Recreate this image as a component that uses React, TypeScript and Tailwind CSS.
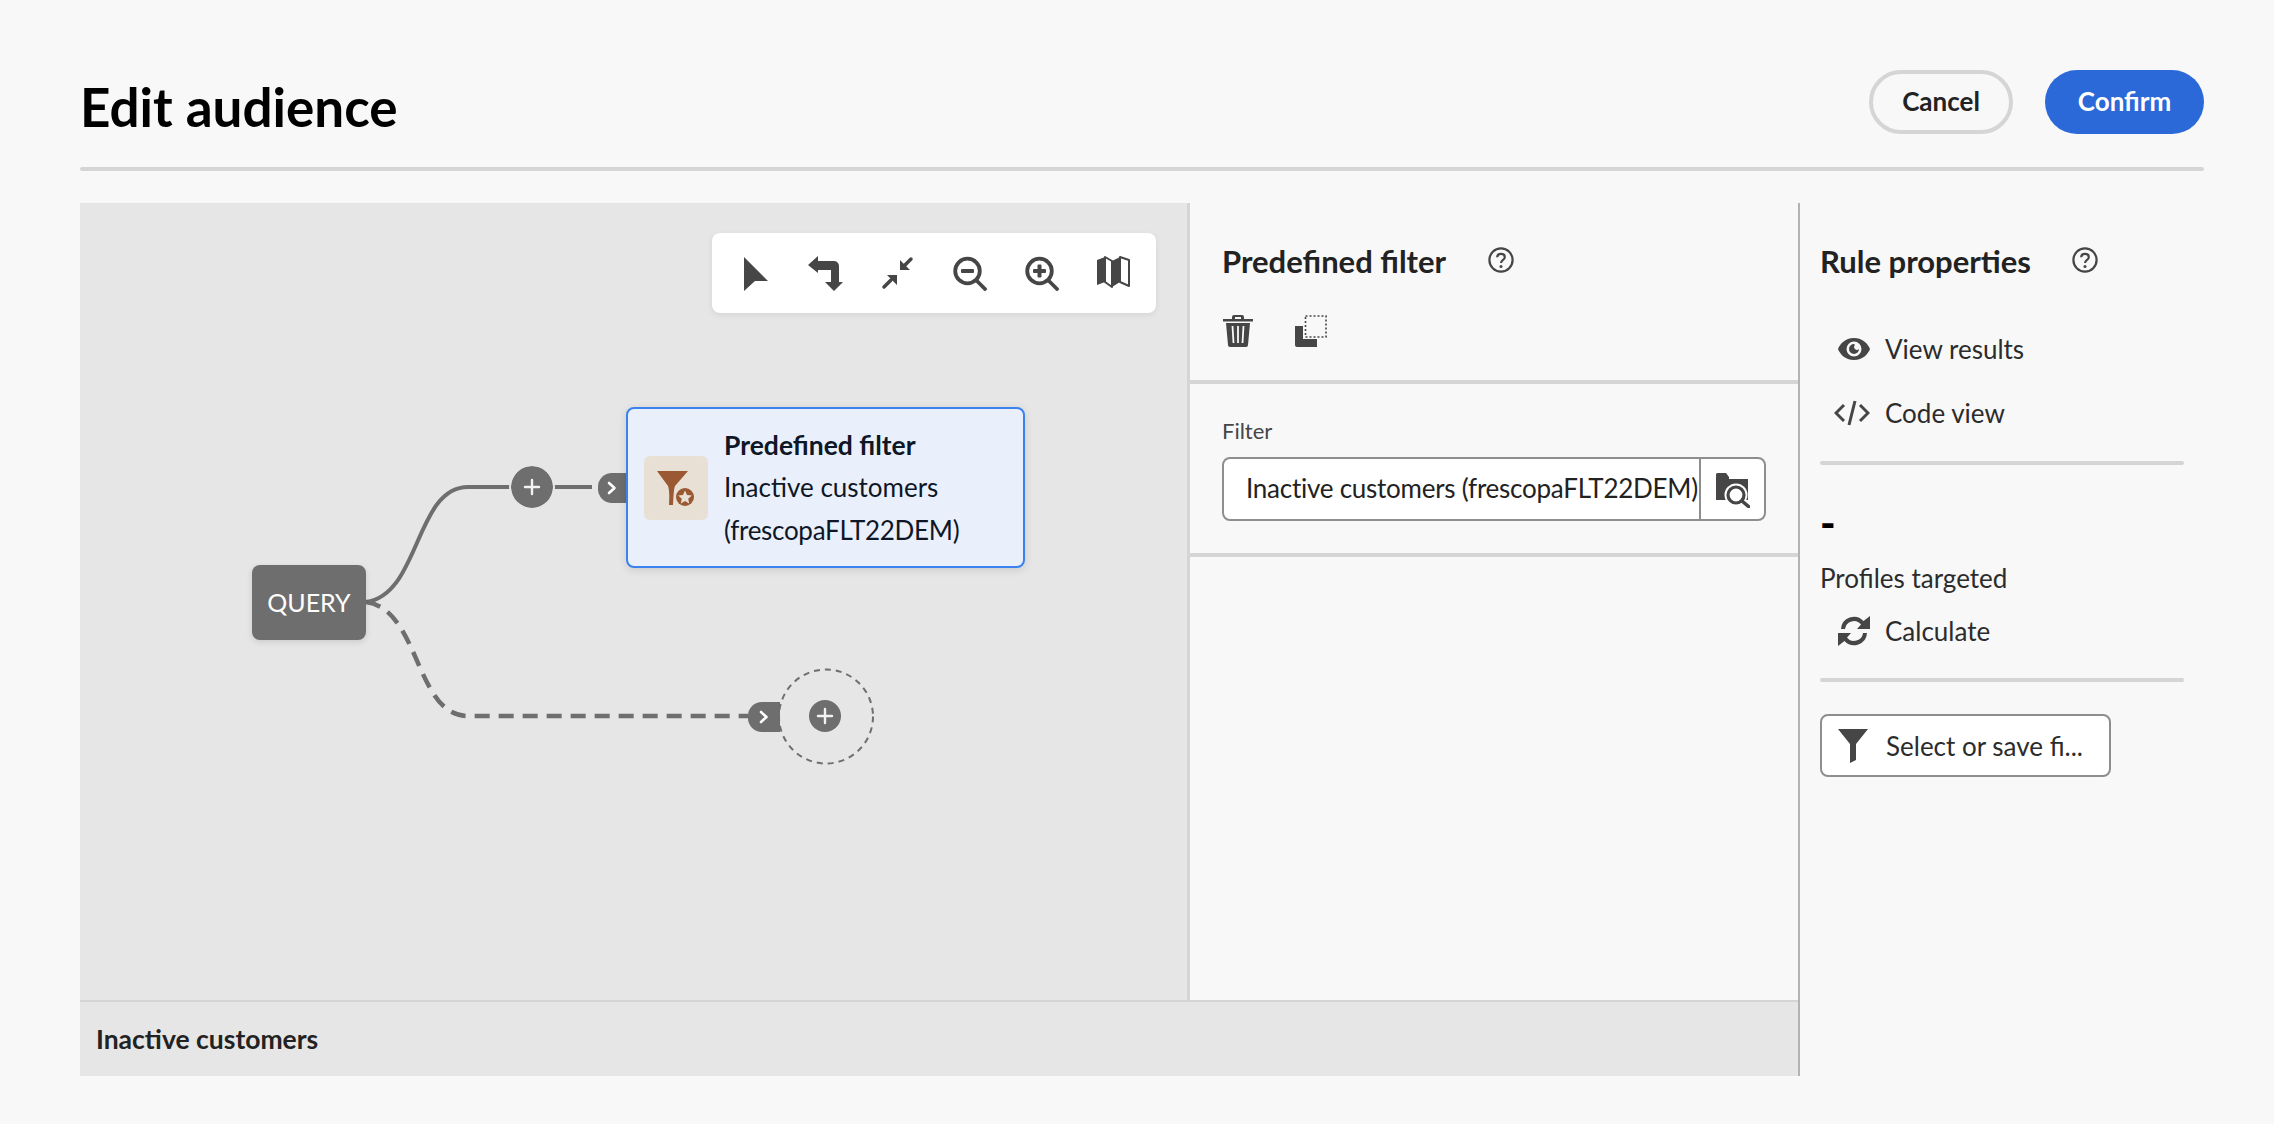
const ICON = "#464646";

function ToolIcon({ children }: { children: React.ReactNode }) {
  return (
    <svg viewBox="0 0 36 36" className="h-9 w-9 shrink-0" fill={ICON}>
      {children}
    </svg>
  );
}

function Magnifier({ plus }: { plus?: boolean }) {
  return (
    <ToolIcon>
      <circle cx="15.5" cy="16" r="12.3" fill="none" stroke={ICON} strokeWidth="3.8" />
      <path d="M25 26 L33 34" stroke={ICON} strokeWidth="3.8" strokeLinecap="round" />
      <rect x="9" y="14" width="13" height="4" rx="1" />
      {plus && <rect x="13.5" y="9.5" width="4" height="13" rx="1" />}
    </ToolIcon>
  );
}

function Toolbar() {
  return (
    <div className="absolute left-[632px] top-[30px] flex h-20 w-[444px] items-center gap-9 rounded-lg bg-white pl-6 shadow-[0_2px_6px_rgba(0,0,0,0.08)]">
      <ToolIcon>
        <path d="M8 2 L32 26 H19 L8 36 Z" />
      </ToolIcon>
      <ToolIcon>
        <path d="M0 10 L10 1 V6 H26 a5 5 0 0 1 5 5 V27 H35 L26 36 L17 27 H23 V15 H10 V18 Z" />
      </ToolIcon>
      <ToolIcon>
        <path d="M20 15 V5 L30 15 Z M17 20 H7 L17 30 Z" />
        <path d="M31 4 L24 11 M4 32 L11 25" stroke={ICON} strokeWidth="3.5" strokeLinecap="round" />
      </ToolIcon>
      <Magnifier />
      <Magnifier plus />
      <ToolIcon>
        <path d="M1 5 L9 2 V27 L1 30 Z M16 6 L24 2 V27 L16 32 Z" />
        <path d="M9 2 L16 6 V32 L9 27 Z M24 2 L33 5 V31 L24 27 Z" fill="none" stroke={ICON} strokeWidth="2" strokeLinejoin="round" />
      </ToolIcon>
    </div>
  );
}

function Flow() {
  return (
    <svg className="absolute left-0 top-0 h-[797px] w-[1107px]" fill="none">
      <path d="M286 399 C 340 392, 335 284, 388 284 H 512" stroke="#6e6e6e" strokeWidth="4" />
      <path d="M286 399 C 340 406, 335 513, 388 513 H 668" stroke="#6e6e6e" strokeWidth="4.5" strokeDasharray="15 9" />
      <circle cx="746" cy="513.5" r="47" stroke="#6e6e6e" strokeWidth="2" strokeDasharray="6 5" />
    </svg>
  );
}

function AddButton({ small }: { small?: boolean }) {
  return (
    <div
      className={
        small
          ? "absolute left-[729px] top-[497px] flex h-8 w-8 items-center justify-center rounded-full bg-[#6e6e6e]"
          : "absolute left-[431px] top-[263px] flex h-[42px] w-[42px] items-center justify-center rounded-full bg-[#6e6e6e] outline-2 outline-[#e6e6e6]"
      }
    >
      <svg viewBox="0 0 18 18" className="h-[18px] w-[18px]">
        <path d="M9 2 V16 M2 9 H16" stroke="#f2f2f2" strokeWidth="2.4" strokeLinecap="round" />
      </svg>
    </div>
  );
}

function Chevron({ className }: { className: string }) {
  return (
    <div className={`absolute flex items-center justify-center rounded-l-[14px] bg-[#6e6e6e] ${className}`}>
      <svg viewBox="0 0 10 14" className="h-3.5 w-2.5">
        <path d="M2 2 L7.5 7 L2 12" fill="none" stroke="#fff" strokeWidth="2.6" strokeLinecap="round" strokeLinejoin="round" />
      </svg>
    </div>
  );
}

function FilterCard() {
  return (
    <div className="absolute left-[546px] top-[204px] flex h-[161px] w-[399px] items-center gap-4 rounded-lg border-2 border-[#3b82ee] bg-[#e9f0fc] pl-4 text-[26px] leading-[42.5px] text-[#0f1726] shadow-[0_2px_8px_rgba(0,0,0,0.12)]">
      <div className="flex h-16 w-16 shrink-0 items-center justify-center rounded-md bg-[#e8e0d4]">
        <svg viewBox="0 0 40 42" className="h-[42px] w-10">
          <path d="M1 4 H32 L19 19 C 17.5 23 17.5 31 17 38 L13 38 C 13.5 31 13.5 23 12 19 Z" fill="#9a5833" />
          <circle cx="29" cy="30" r="10.5" fill="#e8e0d4" />
          <circle cx="29" cy="30" r="9" fill="#9a5833" />
          <path d="M29 23.5 L31 28 L35.8 28.5 L32.2 31.7 L33.2 36.4 L29 34 L24.8 36.4 L25.8 31.7 L22.2 28.5 L27 28 Z" fill="#e8e0d4" />
        </svg>
      </div>
      <div>
        <p className="text-[26.5px] font-bold">Predefined filter</p>
        <p>Inactive customers</p>
        <p className="tracking-[-0.3px]">(frescopaFLT22DEM)</p>
      </div>
    </div>
  );
}

function HelpIcon() {
  return (
    <svg viewBox="0 0 26 26" className="-mt-0.5 h-[26px] w-[26px] shrink-0">
      <circle cx="13" cy="13" r="11.6" fill="none" stroke="#464646" strokeWidth="2.2" />
      <path d="M9.2 10.2 C 9.4 5.8 16.8 5.8 16.8 10.2 C 16.8 13 13.1 13 13.1 16" fill="none" stroke="#464646" strokeWidth="2.2" />
      <circle cx="13" cy="19.4" r="1.5" fill="#464646" />
    </svg>
  );
}

function Canvas() {
  return (
    <div className="relative min-w-0 flex-1 bg-[#e6e6e6]">
      <Flow />
      <Toolbar />
      <div className="absolute left-[172px] top-[362px] flex h-[75px] w-[114px] items-center justify-center rounded-lg bg-[#6e6e6e] text-[25px] text-white shadow-[0_2px_6px_rgba(0,0,0,0.12)]">
        QUERY
      </div>
      <AddButton />
      <Chevron className="left-[518px] top-[270px] h-[30px] w-7" />
      <FilterCard />
      <Chevron className="left-[668px] top-[499px] h-[30px] w-8" />
      <AddButton small />
    </div>
  );
}

function FilterPanel() {
  return (
    <div className="flex w-[611px] shrink-0 flex-col border-l-[3px] border-[#d5d5d5]">
      <div className="h-[181px] border-b-4 border-[#d5d5d5] pl-8 pt-[38px]">
        <div className="flex items-center gap-[42px]">
          <h2 className="text-[31px] font-bold leading-[40px] text-[#222]">Predefined filter</h2>
          <HelpIcon />
        </div>
        <div className="mt-[34px] flex items-start gap-[42px] pl-px">
          <svg viewBox="0 0 30 32" className="h-8 w-[30px]" fill={ICON}>
            <path d="M0 4 H9 V2 a2 2 0 0 1 2-2 H19 a2 2 0 0 1 2 2 V4 H30 V6.5 H0 Z M12 2 V4 H18 V2 Z" />
            <path d="M3 8 H27 L25 30 a2 2 0 0 1-2 2 H7 a2 2 0 0 1-2-2 Z" />
            <path d="M9.5 11 L10.5 28 M15 11 V28 M20.5 11 L19.5 28" stroke="#f8f8f8" strokeWidth="1.8" />
          </svg>
          <svg viewBox="0 0 32 32" className="h-8 w-8" fill={ICON}>
            <path d="M0 11 H8 V24 H22 V32 H2 a2 2 0 0 1-2-2 Z" />
            <rect x="10.5" y="1" width="20.5" height="21" fill="none" stroke={ICON} strokeWidth="1.6" strokeDasharray="2 2" />
          </svg>
        </div>
      </div>
      <div className="h-[173px] border-b-4 border-[#d5d5d5] pl-8 pt-[27px]">
        <label className="mb-1.5 block text-[22px] leading-[40px] text-[#464646]">Filter</label>
        <div className="flex h-16 w-[544px] items-stretch overflow-hidden rounded-lg border-2 border-[#8e8e8e] bg-white">
          <div className="w-[475px] shrink-0 overflow-hidden whitespace-nowrap pl-[22px] text-[26px] leading-[58px] tracking-[-0.25px] text-[#222]">
            Inactive customers (frescopaFLT22DEM)
          </div>
          <div className="flex flex-1 items-center justify-center border-l-2 border-[#8e8e8e]">
            <svg viewBox="0 0 34 37" className="h-[37px] w-[34px]" fill={ICON}>
              <path d="M0 3.5 a1.5 1.5 0 0 1 1.5-1.5 H10 L13 6 V8 H32 V29 H0 Z" />
              <circle cx="20" cy="24" r="11.5" fill="#fff" />
              <circle cx="20" cy="24" r="8" fill="#fff" stroke={ICON} strokeWidth="3.2" />
              <path d="M26 30 L32.5 35.5" stroke={ICON} strokeWidth="3.6" strokeLinecap="round" />
            </svg>
          </div>
        </div>
      </div>
    </div>
  );
}

function RuleAction({ icon, label }: { icon: React.ReactNode; label: string }) {
  return (
    <div className="flex h-10 items-center text-[26px] text-[#2c2c2c]">
      <span className="flex w-[65px] justify-end pr-[15px]">{icon}</span>
      {label}
    </div>
  );
}

function RulePanel() {
  return (
    <div className="flex flex-1 flex-col pl-[20px] pr-5">
      <div className="mt-[38px] flex items-center gap-[41px]">
        <h2 className="text-[31px] font-bold leading-[40px] text-[#222]">Rule properties</h2>
        <HelpIcon />
      </div>
      <div className="mt-12 flex flex-col gap-[24px]">
        <RuleAction
          label="View results"
          icon={
            <svg viewBox="0 0 32 22" className="h-[22px] w-8" fill={ICON}>
              <path fillRule="evenodd" d="M16 0 C 25 0 30 6 32 11 C 30 16 25 22 16 22 C 7 22 2 16 0 11 C 2 6 7 0 16 0 Z M16 3.5 a7.5 7.5 0 1 0 0 15 a7.5 7.5 0 1 0 0-15 Z" />
              <path fillRule="evenodd" d="M16 6 a5 5 0 1 0 5 5 a2.5 2.5 0 0 1-4-4 Z" />
            </svg>
          }
        />
        <RuleAction
          label="Code view"
          icon={
            <svg viewBox="0 0 36 26" className="h-[26px] w-9" fill="none" stroke={ICON} strokeWidth="3">
              <path d="M10 5 L2 13 L10 21 M26 5 L34 13 L26 21 M21 1 L15 25" />
            </svg>
          }
        />
      </div>
      <div className="mt-7 h-1 rounded-sm bg-[#d5d5d5]" />
      <div className="mt-[43px] h-[28px] text-[42px] font-black leading-[28px] text-black">-</div>
      <p className="mt-[22px] text-[26px] leading-[40px] text-[#2c2c2c]">Profiles targeted</p>
      <div className="mt-[13px]">
        <RuleAction
          label="Calculate"
          icon={
            <svg viewBox="0 0 32 32" className="h-8 w-8" fill={ICON}>
              <path d="M3 14 A13 13 0 0 1 25.5 6 L32 1 V14 H19 L23 9.5 A9 9 0 0 0 7 14 Z" />
              <path d="M29 18 A13 13 0 0 1 6.5 26 L0 31 V18 H13 L9 22.5 A9 9 0 0 0 25 18 Z" />
            </svg>
          }
        />
      </div>
      <div className="mt-[27px] h-1 rounded-sm bg-[#d5d5d5]" />
      <div className="mt-8 flex h-[63px] w-[291px] items-center rounded-lg border-2 border-[#8e8e8e] bg-white pl-4 text-[26px] text-[#2c2c2c]">
        <svg viewBox="0 0 30 34" className="mr-[18px] h-[34px] w-[30px]" fill={ICON}>
          <path d="M0 0 H30 L18 15 V31 L12 34 V15 Z" />
        </svg>
        <span className="pt-0.5">Select or save fi...</span>
      </div>
    </div>
  );
}

export default function App() {
  return (
    <div className="min-h-[1124px] bg-[#f8f8f8] pb-12 pl-20 pr-[70px] font-['Lato',sans-serif]">
      <header className="flex h-[167px] items-start justify-between pt-[70px]">
        <h1 className="mt-2.5 text-[53px] font-bold leading-none text-black">Edit audience</h1>
        <div className="flex items-center gap-8">
          <button className="h-16 w-[144px] rounded-full border-4 border-[#d5d5d5] pb-0.5 text-[26px] font-bold text-[#222]">
            Cancel
          </button>
          <button className="h-16 w-[159px] rounded-full bg-[#2b68d8] pb-0.5 text-[26px] font-bold text-white">
            Confirm
          </button>
        </div>
      </header>
      <div className="h-1 rounded-sm bg-[#d5d5d5]" />
      <main className="mt-8 flex h-[873px]">
        <div className="flex w-[1718px] shrink-0 flex-col">
          <div className="flex min-h-0 flex-1">
            <Canvas />
            <FilterPanel />
          </div>
          <div className="flex h-[76px] shrink-0 items-center border-t-2 border-[#d5d5d5] bg-[#e6e6e6] pl-4 pt-0.5 text-[26.5px] font-bold text-[#222]">
            Inactive customers
          </div>
        </div>
        <div className="flex flex-1 border-l-2 border-[#b3b3b3]">
          <RulePanel />
        </div>
      </main>
    </div>
  );
}
